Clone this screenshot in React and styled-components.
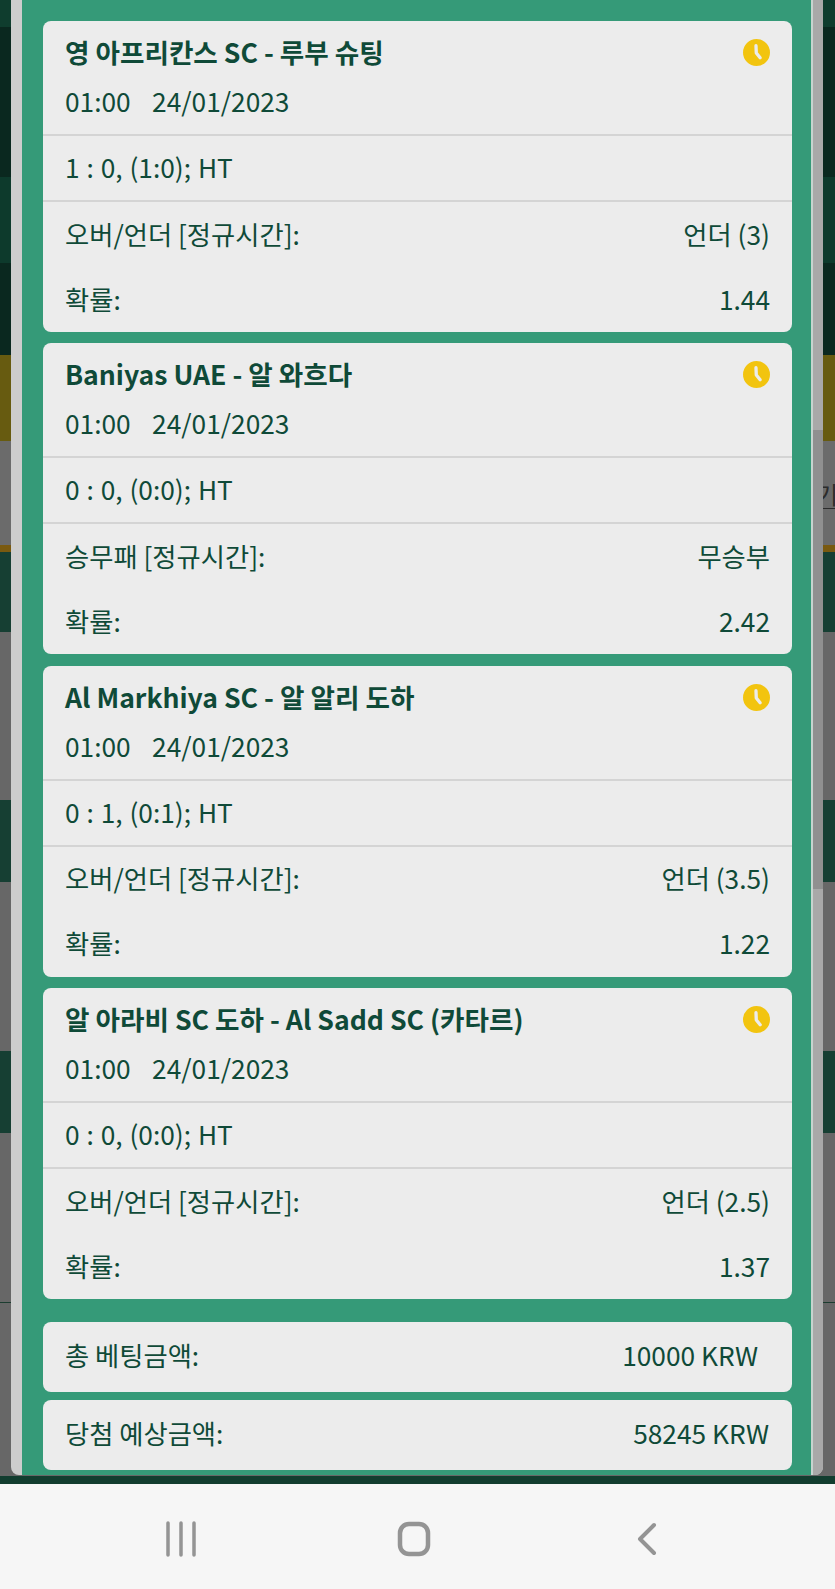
import React from "react";
import styled, { createGlobalStyle } from "styled-components";

const GlobalStyle = createGlobalStyle`
  html, body {
    margin: 0;
    padding: 0;
    background: #f6f6f6;
  }
`;

const Screen = styled.div`
  width: 835px;
  height: 1589px;
  display: flex;
  flex-direction: column;
  overflow: hidden;
  font-family: "Noto Sans CJK KR", "Noto Sans", sans-serif;
  color: #0f4a38;
`;

const Stage = styled.div`
  position: relative;
  height: 1484px;
  display: flex;
  flex-direction: column;
  flex: none;
  overflow: hidden;
  background: #123d2f;
`;

const Band = styled.div`
  height: ${(props) => props.h}px;
  flex: none;
  background: ${(props) => props.color};
  border-bottom: ${(props) => (props.line ? "1px solid #1c3d30" : "none")};
`;

const BackdropLink = styled.span`
  position: absolute;
  left: 816px;
  top: 479px;
  font-size: 24px;
  line-height: 29px;
  color: #2c2c2c;
  padding-right: 10px;
  border-bottom: 1px solid #2c2c2c;
`;

const Modal = styled.div`
  position: absolute;
  left: 11px;
  top: 0;
  width: 812px;
  height: 1475px;
  display: flex;
  background: #cdcdcd;
  border-radius: 0 0 8px 8px;
  overflow: hidden;
`;

const Content = styled.div`
  margin-left: 11px;
  width: 791px;
  flex: none;
  box-sizing: border-box;
  padding: 21px 19px 0 21px;
  background: #359a78;
  border-right: 2px solid #c6d4cf;
  display: flex;
  flex-direction: column;
  gap: 11.4px;
`;

const ScrollTrack = styled.div`
  flex: 1;
  background: #a9a9a9;
`;

const ScrollThumb = styled.div`
  margin-top: 430px;
  height: 459px;
  background: #909090;
`;

const Card = styled.div`
  background: #ececec;
  border-radius: 8px;
`;

const CardHead = styled.div`
  position: relative;
  height: 115px;
  box-sizing: border-box;
  padding: 11px 22px 0;
  border-bottom: 2px solid #d4d4d4;
`;

const Title = styled.div`
  font-size: 26.6px;
  line-height: 40px;
  font-weight: 700;
  color: #0f4a38;
`;

const MatchTime = styled.div`
  font-size: 26.3px;
  line-height: 58px;
  word-spacing: 15.5px;
`;

const ClockBadge = styled.svg`
  position: absolute;
  right: 22px;
  top: 18px;
  width: 27px;
  height: 27px;
`;

const Row = styled.div`
  height: ${(props) => (props.divided ? 66 : 65)}px;
  box-sizing: border-box;
  padding: 0 22px 3px;
  display: flex;
  align-items: center;
  justify-content: space-between;
  font-size: 26.3px;
  word-spacing: ${(props) => (props.divided ? 1 : 0)}px;
  border-bottom: ${(props) => (props.divided ? "2px solid #d4d4d4" : "none")};
`;

const SummaryList = styled.div`
  margin-top: 11px;
  display: flex;
  flex-direction: column;
  gap: 8px;
`;

const SummaryCard = styled.div`
  height: 70px;
  box-sizing: border-box;
  padding: 0 ${(props) => props.inset}px 4px 22px;
  background: #ececec;
  border-radius: 8px;
  display: flex;
  align-items: center;
  justify-content: space-between;
  font-size: 26.3px;
`;

const NavBar = styled.div`
  flex: 1;
  box-sizing: border-box;
  padding: 5px 0 0 64px;
  background: #f6f6f6;
  display: flex;
  align-items: center;
`;

const NavSlot = styled.div`
  width: 233px;
  display: flex;
  justify-content: center;
`;

const NavIcon = styled.svg`
  width: 60px;
  height: 60px;
  fill: none;
  stroke: #949494;
  stroke-linecap: round;
  stroke-linejoin: round;
`;

const bands = [
  { h: 27, color: "#0f3d2e" },
  { h: 150, color: "#0a281f" },
  { h: 86, color: "#0d3a2c" },
  { h: 92, color: "#0a281f" },
  { h: 86, color: "#675b10" },
  { h: 104, color: "#6b6b6b" },
  { h: 7, color: "#7a5a10" },
  { h: 80, color: "#163f33" },
  { h: 168, color: "#676767" },
  { h: 82, color: "#163f33" },
  { h: 169, color: "#676767" },
  { h: 82, color: "#163f33" },
  { h: 169, color: "#676767", line: true },
  { h: 173, color: "#676767" },
];

const matches = [
  {
    title: "영 아프리칸스 SC - 루부 슈팅",
    score: "1 : 0, (1:0); HT",
    market: "오버/언더 [정규시간]:",
    pick: "언더 (3)",
    odds: "1.44",
  },
  {
    title: "Baniyas UAE - 알 와흐다",
    score: "0 : 0, (0:0); HT",
    market: "승무패 [정규시간]:",
    pick: "무승부",
    odds: "2.42",
  },
  {
    title: "Al Markhiya SC - 알 알리 도하",
    score: "0 : 1, (0:1); HT",
    market: "오버/언더 [정규시간]:",
    pick: "언더 (3.5)",
    odds: "1.22",
  },
  {
    title: "알 아라비 SC 도하 - Al Sadd SC (카타르)",
    score: "0 : 0, (0:0); HT",
    market: "오버/언더 [정규시간]:",
    pick: "언더 (2.5)",
    odds: "1.37",
  },
];

function Clock() {
  return (
    <ClockBadge viewBox="0 0 26 26">
      <circle cx="13" cy="13" r="13" fill="#f2c40f" />
      <path
        d="M12.5 6.5 L12.8 13.5 L16.5 18"
        fill="none"
        stroke="#ececec"
        strokeWidth="3.2"
        strokeLinecap="round"
        strokeLinejoin="round"
      />
    </ClockBadge>
  );
}

function App() {
  return (
    <Screen>
      <GlobalStyle />
      <Stage>
        {bands.map((band, i) => (
          <Band key={i} h={band.h} color={band.color} line={band.line} />
        ))}
        <BackdropLink>기</BackdropLink>
        <Modal>
          <Content>
            {matches.map((match) => (
              <Card key={match.title}>
                <CardHead>
                  <Title>{match.title}</Title>
                  <MatchTime>01:00 24/01/2023</MatchTime>
                  <Clock />
                </CardHead>
                <Row divided>{match.score}</Row>
                <Row>
                  <span>{match.market}</span>
                  <span>{match.pick}</span>
                </Row>
                <Row>
                  <span>확률:</span>
                  <span>{match.odds}</span>
                </Row>
              </Card>
            ))}
            <SummaryList>
              <SummaryCard inset={34}>
                <span>총 베팅금액:</span>
                <span>10000 KRW</span>
              </SummaryCard>
              <SummaryCard inset={23}>
                <span>당첨 예상금액:</span>
                <span>58245 KRW</span>
              </SummaryCard>
            </SummaryList>
          </Content>
          <ScrollTrack>
            <ScrollThumb />
          </ScrollTrack>
        </Modal>
      </Stage>
      <NavBar>
        <NavSlot>
          <NavIcon viewBox="0 0 60 60" strokeWidth="3.5">
            <path d="M17 14V46M30 14V46M43 14V46" />
          </NavIcon>
        </NavSlot>
        <NavSlot>
          <NavIcon viewBox="0 0 60 60" strokeWidth="4.5">
            <rect x="16" y="15" width="28" height="30" rx="9" />
          </NavIcon>
        </NavSlot>
        <NavSlot>
          <NavIcon viewBox="0 0 60 60" strokeWidth="4">
            <path d="M37 16L23 30L37 44" />
          </NavIcon>
        </NavSlot>
      </NavBar>
    </Screen>
  );
}

export default App;
